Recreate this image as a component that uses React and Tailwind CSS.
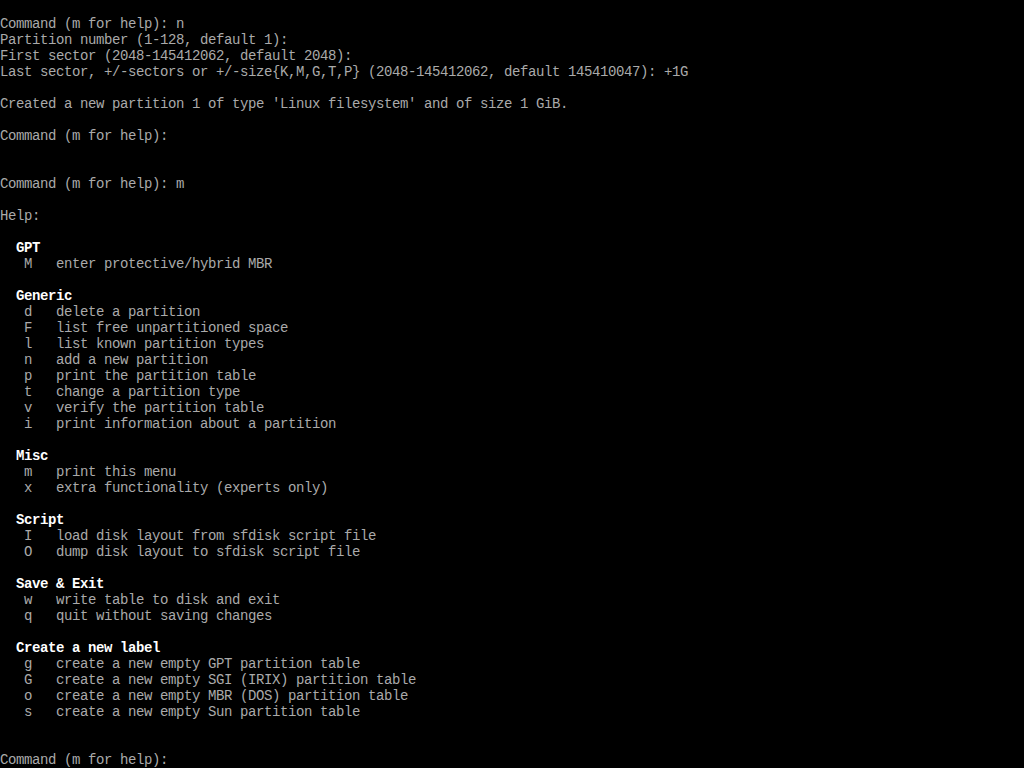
import React from "react";

// console screen: 8x16 cells, 48 rows
const lines = [
  "",
  "Command (m for help): n",
  "Partition number (1-128, default 1):",
  "First sector (2048-145412062, default 2048):",
  "Last sector, +/-sectors or +/-size{K,M,G,T,P} (2048-145412062, default 145410047): +1G",
  "",
  "Created a new partition 1 of type 'Linux filesystem' and of size 1 GiB.",
  "",
  "Command (m for help):",
  "",
  "",
  "Command (m for help): m",
  "",
  "Help:",
  "",
  { b: "  GPT" },
  "   M   enter protective/hybrid MBR",
  "",
  { b: "  Generic" },
  "   d   delete a partition",
  "   F   list free unpartitioned space",
  "   l   list known partition types",
  "   n   add a new partition",
  "   p   print the partition table",
  "   t   change a partition type",
  "   v   verify the partition table",
  "   i   print information about a partition",
  "",
  { b: "  Misc" },
  "   m   print this menu",
  "   x   extra functionality (experts only)",
  "",
  { b: "  Script" },
  "   I   load disk layout from sfdisk script file",
  "   O   dump disk layout to sfdisk script file",
  "",
  { b: "  Save & Exit" },
  "   w   write table to disk and exit",
  "   q   quit without saving changes",
  "",
  { b: "  Create a new label" },
  "   g   create a new empty GPT partition table",
  "   G   create a new empty SGI (IRIX) partition table",
  "   o   create a new empty MBR (DOS) partition table",
  "   s   create a new empty Sun partition table",
  "",
  "",
  "Command (m for help):",
];

export default function App() {
  return (
    <div className="w-[1024px] h-[768px] bg-black overflow-hidden font-['Liberation_Mono',monospace] text-[14px] tracking-[-0.4px] leading-4 text-[#aaaaaa]">
      {lines.map((l, i) =>
        typeof l === "string" ? (
          <div key={i} className="h-4 whitespace-pre">{l}</div>
        ) : (
          <div key={i} className="h-4 whitespace-pre font-bold text-white">{l.b}</div>
        )
      )}
    </div>
  );
}
